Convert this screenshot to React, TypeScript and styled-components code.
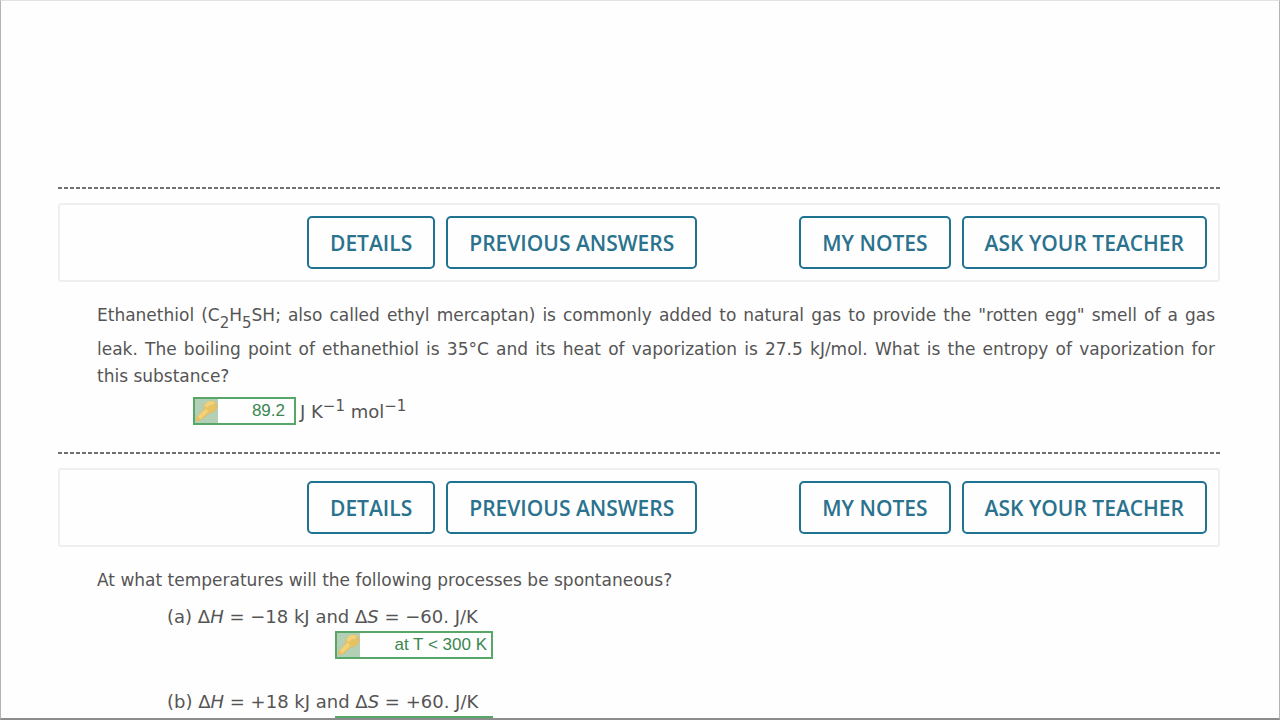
import React from "react";
import styled, { createGlobalStyle } from "styled-components";

const GlobalStyle = createGlobalStyle`
  * { box-sizing: border-box; }
  body { margin: 0; background: #fefefe; }
`;

const Page = styled.main`
  height: 100vh;
  overflow: hidden;
  padding: 186px 59px 0 57px;
  border: 1px solid #b4b4b4;
  border-top-color: #e2e2e2;
  border-bottom: 2px solid #8c8c8c;
  background: #fefefe;
  color: #555;
  font: 18px/27px "DejaVu Sans", Verdana, sans-serif;
`;

const Question = styled.section`
  display: flex;
  flex-direction: column;
  height: 265px;
`;

const Divider = styled.hr`
  width: 100%;
  height: 2px;
  margin: 0 0 14px;
  border: 0;
  flex: none;
  background: repeating-linear-gradient(90deg, #707070 0 4px, transparent 4px 6px);
`;

const Toolbar = styled.div`
  display: flex;
  flex: none;
  align-items: center;
  justify-content: space-between;
  height: 79px;
  padding: 0 11px 0 247px;
  border: 2px solid #efefef;
  border-radius: 3px;
`;

const ButtonGroup = styled.div`
  display: flex;
  gap: 11px;
`;

const ActionButton = styled.button`
  height: 53px;
  padding: 0 21px;
  border: 2px solid #1f7391;
  border-radius: 5px;
  background: #fefefe;
  color: #2a728d;
  font: 600 21px/28px "Open Sans", sans-serif;
  white-space: nowrap;
`;

const Body = styled.div`
  padding: 20px 5px 0 39px;
`;

const Paragraph = styled.p`
  margin: 0;
  font-size: 17px;
  text-align: justify;
`;

const Sub = styled.sub`
  font-size: 15px;
  line-height: 26px;
  vertical-align: -7px;
`;

const Sup = styled.sup`
  font-size: 15px;
  line-height: 0;
`;

const AnswerRow = styled.div<{ $indent: number }>`
  display: flex;
  align-items: center;
  gap: 4px;
  height: 28px;
  margin: 7px 0 0 ${(p) => p.$indent}px;
`;

const AnswerBox = styled.label<{ $width: number }>`
  display: flex;
  width: ${(p) => p.$width}px;
  height: 28px;
  border: 2px solid #59a768;
  background: #fefefe;
`;

const AnswerInput = styled.input<{ $inset: number }>`
  flex: 1;
  min-width: 0;
  padding: 0 ${(p) => p.$inset}px 0 0;
  border: 0;
  background: transparent;
  color: #3a8750;
  font: 17px/24px "Liberation Sans", Arial, sans-serif;
  text-align: right;
`;

const Parts = styled.ol`
  margin: 9px 0 0;
  padding: 0 0 0 70px;
  list-style: none;
`;

const Part = styled.li`
  height: 85px;

  ${AnswerRow} {
    margin-top: 1px;
  }
`;

const KeyIcon = () => (
  <svg width="23" height="24" viewBox="0 0 23 24" aria-hidden="true">
    <rect width="23" height="24" fill="#b3d0b6" />
    <path
      d="M9 10 C8 5 12 2 17 2 C20 2 22 4 22 7 C22 11 18 14 14 14 L11 17 L9 18 L8 20 L5 20 L4 22 L1 21 L2 18 Z"
      fill="#e8c260"
      stroke="#dcbd72"
      strokeWidth="1"
    />
    <path d="M11 8 C12 4 16 3 19 5 M4 19 L12 11" fill="none" stroke="#f0d27a" strokeWidth="4" />
    <circle cx="19" cy="6" r="1" fill="#d8bd80" />
  </svg>
);

type AnswerProps = { value: string; width: number; inset: number; name: string };

const Answer = ({ value, width, inset, name }: AnswerProps) => (
  <AnswerBox $width={width}>
    <KeyIcon />
    <AnswerInput $inset={inset} aria-label={name} defaultValue={value} readOnly />
  </AnswerBox>
);

const QuestionTools = () => (
  <Toolbar>
    <ButtonGroup>
      <ActionButton type="button">DETAILS</ActionButton>
      <ActionButton type="button">PREVIOUS ANSWERS</ActionButton>
    </ButtonGroup>
    <ButtonGroup>
      <ActionButton type="button">MY NOTES</ActionButton>
      <ActionButton type="button">ASK YOUR TEACHER</ActionButton>
    </ButtonGroup>
  </Toolbar>
);

const parts = [
  { letter: "a", h: "−18", s: "−60.", answer: "at T < 300 K" },
  { letter: "b", h: "+18", s: "+60.", answer: "at T > 300 K" },
];

export default function App() {
  return (
    <Page>
      <GlobalStyle />
      <Question>
        <Divider />
        <QuestionTools />
        <Body>
          <Paragraph>
            Ethanethiol (C<Sub>2</Sub>H<Sub>5</Sub>SH; also called ethyl mercaptan) is commonly added to natural
            gas to provide the "rotten egg" smell of a gas leak. The boiling point of ethanethiol is 35°C and
            its heat of vaporization is 27.5 kJ/mol. What is the entropy of vaporization for
            this&nbsp;substance?
          </Paragraph>
          <AnswerRow $indent={96}>
            <Answer value="89.2" width={103} inset={9} name="Entropy of vaporization" />
            <span>
              J K<Sup>−1</Sup> mol<Sup>−1</Sup>
            </span>
          </AnswerRow>
        </Body>
      </Question>
      <Question>
        <Divider />
        <QuestionTools />
        <Body>
          <Paragraph>At what temperatures will the following processes be spontaneous?</Paragraph>
          <Parts>
            {parts.map((part) => (
              <Part key={part.letter}>
                <div>
                  ({part.letter}) Δ<i>H</i> = {part.h} kJ and Δ<i>S</i> = {part.s} J/K
                </div>
                <AnswerRow $indent={168}>
                  <Answer value={part.answer} width={158} inset={4} name={`Part ${part.letter}`} />
                </AnswerRow>
              </Part>
            ))}
          </Parts>
        </Body>
      </Question>
    </Page>
  );
}
